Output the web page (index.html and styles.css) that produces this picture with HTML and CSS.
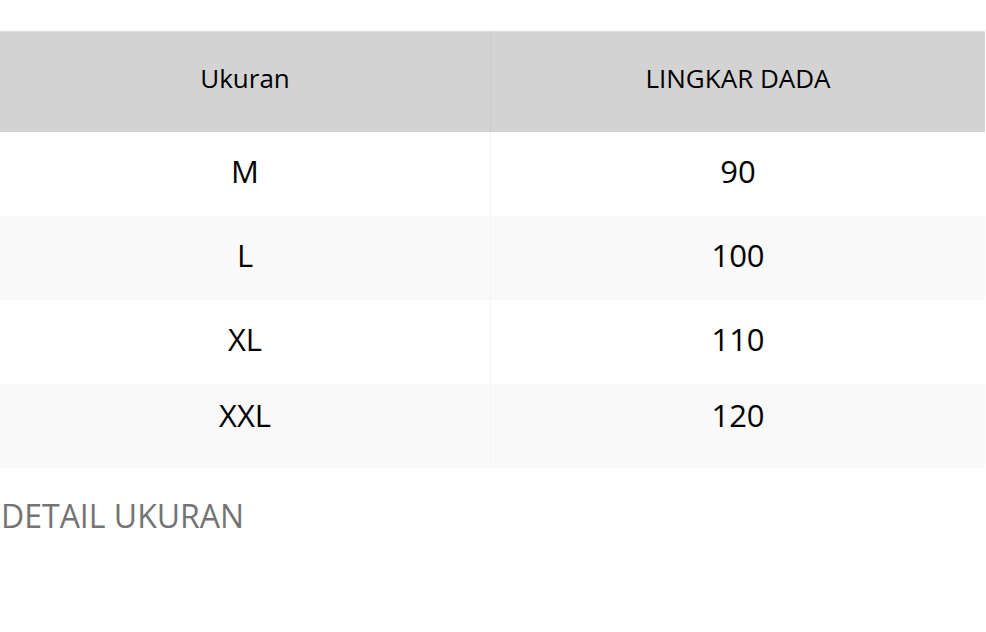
FILE: index.html
```html
<!DOCTYPE html>
<html lang="id">
<head>
<meta charset="utf-8">
<title>Ukuran</title>
<link rel="stylesheet" href="styles.css">
</head>
<body>
<div class="page">
  <table class="size-table">
    <thead>
      <tr class="head-row">
        <th>Ukuran</th>
        <th>LINGKAR DADA</th>
      </tr>
    </thead>
    <tbody>
      <tr class="body-row"><td>M</td><td>90</td></tr>
      <tr class="body-row"><td>L</td><td>100</td></tr>
      <tr class="body-row"><td>XL</td><td>110</td></tr>
      <tr class="body-row last"><td>XXL</td><td>120</td></tr>
    </tbody>
  </table>
  <h2 class="detail-title">DETAIL UKURAN</h2>
</div>
</body>
</html>
```

FILE: styles.css
```css
html, body {
  margin: 0;
  padding: 0;
  background: #fff;
}
body {
  font-family: "Open Sans", "Noto Sans", "DejaVu Sans", sans-serif;
  color: #000;
}
.page {
  padding-top: 31px;
}
.size-table {
  width: 985px;
  border-collapse: collapse;
  table-layout: fixed;
}
.head-row {
  height: 100px;
}
.size-table th {
  padding: 0 0 7px;
  background: #d3d3d3;
  font-weight: 400;
  font-size: 26px;
  text-align: center;
  vertical-align: middle;
  border-top: 1px solid #dcdcdc;
}
.size-table th:first-child {
  width: 490px;
  border-right: 1px solid #c9c9c9;
}
.body-row {
  height: 84px;
}
.size-table td {
  padding: 0 0 5px;
  font-size: 31px;
  text-align: center;
  vertical-align: middle;
}
.body-row.last td {
  padding-bottom: 21px;
}
.size-table td:first-child {
  border-right: 1px solid #f4f4f4;
}
.size-table tbody tr:nth-child(even) td {
  background: #f9f9f9;
}
.detail-title {
  margin: 26px 0 0 1px;
  font-size: 32px;
  font-weight: 400;
  color: #747474;
}
```
